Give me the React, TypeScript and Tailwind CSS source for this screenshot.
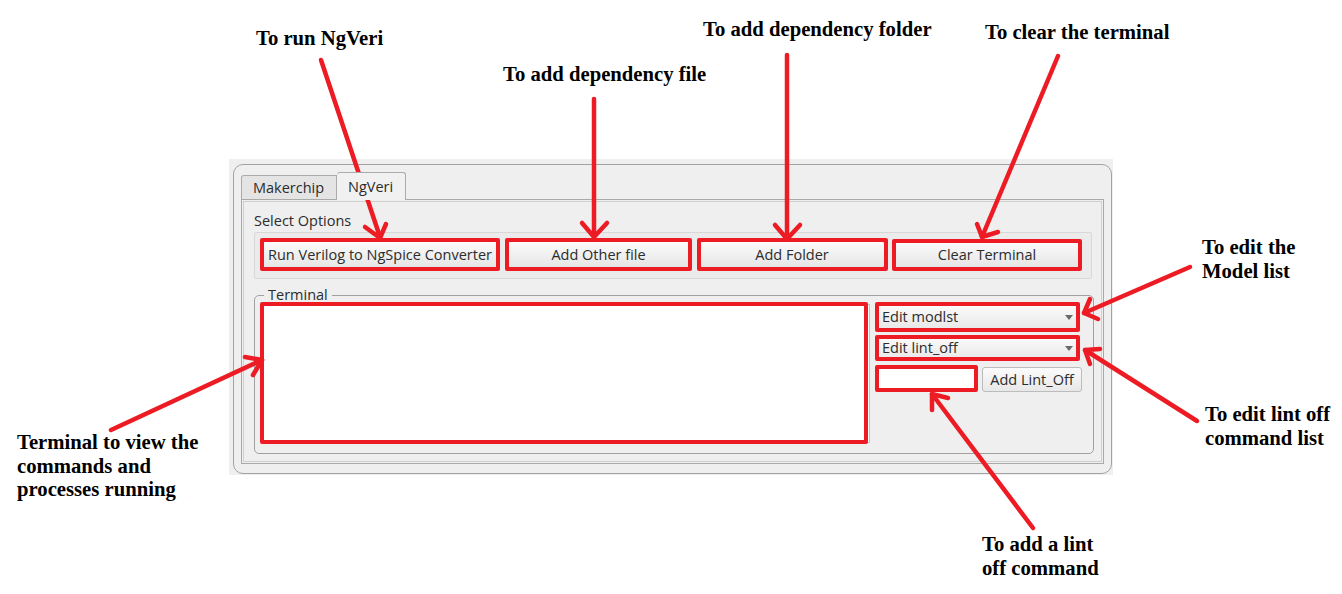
const ui = "font-['Open_Sans',sans-serif] text-[14.5px] leading-[18px] text-[#2c2c2c]";
const note = "absolute font-['Liberation_Serif',serif] font-bold text-[20.7px] leading-[23.7px] text-black whitespace-nowrap";

function Button({ label, w }: { label: string; w: string }) {
  return (
    <div
      className={`${w} h-[27px] flex items-center justify-center rounded-[3px] border border-[#b9b9b9] bg-gradient-to-b from-[#fbfbfb] to-[#e6e6e6] whitespace-nowrap`}
    >
      {label}
    </div>
  );
}

function Combo({ label }: { label: string }) {
  return (
    <div className="w-[202px] h-[26px] flex items-center justify-between pl-[4px] pr-[5px] rounded-[3px] border border-[#b9b9b9] bg-gradient-to-b from-[#fbfbfb] to-[#e8e8e8]">
      <span>{label}</span>
      <svg width="8" height="5" viewBox="0 0 8 5">
        <path d="M0 0 L8 0 L4 5 Z" fill="#6a6a6a" />
      </svg>
    </div>
  );
}

function Annotations() {
  const red = "#ed1c24";
  return (
    <svg
      className="absolute left-0 top-0 pointer-events-none"
      width="1342"
      height="594"
      viewBox="0 0 1342 594"
      fill="none"
      stroke={red}
      strokeWidth="4.5"
      strokeLinecap="round"
      strokeLinejoin="round"
    >
      {/* boxes round the widgets */}
      <rect x="262" y="240" width="236" height="29" strokeWidth="4" />
      <rect x="507" y="240" width="183" height="29" strokeWidth="4" />
      <rect x="699" y="240" width="187" height="29" strokeWidth="4" />
      <rect x="894" y="241" width="186" height="28" strokeWidth="4" />
      <rect x="262" y="304" width="604" height="138" strokeWidth="4" />
      <rect x="877" y="304" width="201" height="26" strokeWidth="4" />
      <rect x="877" y="337" width="201" height="22" strokeWidth="4" />
      <rect x="877" y="367" width="99" height="23" strokeWidth="4" />

      {/* arrows */}
      <line x1="321" y1="60" x2="380" y2="237" />
      <polyline points="365,227 380,238 386,224" />
      <line x1="594" y1="99" x2="594" y2="237" />
      <polyline points="582,223 594,237 607,223" />
      <line x1="787" y1="55" x2="787" y2="239" />
      <polyline points="775,225 787,239 800,225" />
      <line x1="1058" y1="56" x2="982" y2="237" />
      <polyline points="977,224 982,237 998,232" />
      <line x1="1190" y1="267" x2="1084" y2="313" />
      <polyline points="1090,299 1084,313 1098,319" />
      <line x1="1197" y1="421" x2="1085" y2="350" />
      <polyline points="1100,349 1085,350 1090,364" />
      <line x1="1033" y1="528" x2="932" y2="394" />
      <polyline points="932,410 932,394 948,398" />
      <line x1="111" y1="430" x2="262" y2="360" />
      <polyline points="245,357 262,360 253,375" />
    </svg>
  );
}

export default function App() {
  return (
    <div className="relative w-[1342px] h-[594px] bg-white overflow-hidden pt-[159px] pl-[229px]">
      {/* window */}
      <div className={`${ui} w-[884px] h-[316px] bg-[#efefef] pl-[4px] pt-[5px] pr-[1px] pb-[1px]`}>
        <div className="w-[879px] h-[310px] rounded-[10px] border border-[#a2a2a2] pl-[7px] pt-[7px]">
          {/* tabs */}
          <div className="flex items-end h-[27px]">
            <div className="w-[96px] h-[24px] flex items-center pl-[11px] rounded-tl-[3px] border border-b-0 border-[#ababab] bg-[#e4e4e4]">
              Makerchip
            </div>
            <div className="relative z-10 w-[69px] h-[28px] -mb-[1px] flex items-center pl-[11px] rounded-t-[3px] border border-l-0 border-b-0 border-[#ababab] bg-[#f1f1f1]">
              NgVeri
            </div>
          </div>

          {/* tab pane */}
          <div className="w-[863px] h-[265px] border border-[#a9a9a9] shadow-[inset_0_0_0_1px_#efefef,inset_0_0_0_2px_#cfcfcf] pl-[11px] pt-[12px]">
            <div className="pl-[1px]">Select Options</div>
            <div className="mt-[2px] ml-[1px] w-[838px] h-[47px] rounded-[2px] border border-[#d8d8d8] bg-[#ebebeb] flex gap-[9px] pl-[7px] pt-[8px]">
              <Button label="Run Verilog to NgSpice Converter" w="w-[236px]" />
              <Button label="Add Other file" w="w-[183px]" />
              <Button label="Add Folder" w="w-[186px]" />
              <Button label="Clear Terminal" w="w-[186px]" />
            </div>

            <fieldset className="mt-[7px] ml-[1px] w-[838px] rounded-[5px] border border-[#a0a0a0] pl-[7px] pr-[11px] pb-[10px] flex">
              <legend className="ml-[2px] px-[4px]">Terminal</legend>
              <div className="flex gap-[7px]">
                <div className="w-[608px] h-[139px] bg-white border border-[#c4c4c4]" />
                <div className="flex flex-col gap-[5px] w-[205px]">
                  <Combo label="Edit modlst" />
                  <Combo label="Edit lint_off" />
                  <div className="flex gap-[7px] mt-[1px]">
                    <div className="w-[98px] h-[23px] bg-white border border-[#b9b9b9] rounded-[2px]" />
                    <div className="w-[100px] h-[25px] flex items-center justify-center rounded-[3px] border border-[#bcbcbc] bg-gradient-to-b from-[#fbfbfb] to-[#e8e8e8] whitespace-nowrap">
                      Add Lint_Off
                    </div>
                  </div>
                </div>
              </div>
            </fieldset>
          </div>
        </div>
      </div>

      <Annotations />

      <div className={`${note} left-[256px] top-[27px]`}>To run NgVeri</div>
      <div className={`${note} left-[503px] top-[63px]`}>To add dependency file</div>
      <div className={`${note} left-[703px] top-[18px]`}>To add dependency folder</div>
      <div className={`${note} left-[985px] top-[21px]`}>To clear the terminal</div>
      <div className={`${note} left-[1202px] top-[236px]`}>
        To edit the
        <br />
        Model list
      </div>
      <div className={`${note} left-[1205px] top-[403px]`}>
        To edit lint off
        <br />
        command list
      </div>
      <div className={`${note} left-[982px] top-[533px]`}>
        To add a lint
        <br />
        off command
      </div>
      <div className={`${note} left-[17px] top-[431px]`}>
        Terminal to view the
        <br />
        commands and
        <br />
        processes running
      </div>
    </div>
  );
}
